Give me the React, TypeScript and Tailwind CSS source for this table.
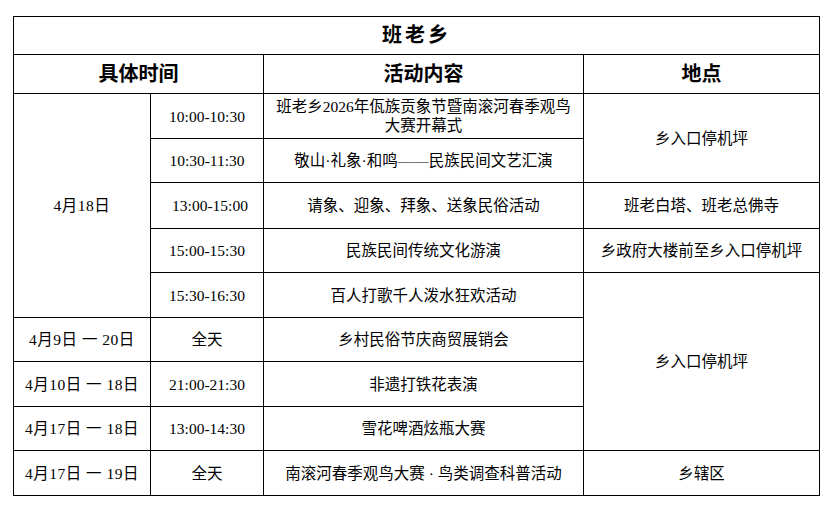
const font = { fontFamily: '"Liberation Serif", "Noto Sans CJK SC", serif' };

const cell = "border border-black text-center align-middle p-0";

export default function App() {
  return (
    <div className="w-[830px] h-[507px] bg-white pt-[16px] pl-[13px] text-black" style={font}>
      <table className="border-collapse table-fixed w-[806px] text-[15.5px] leading-[19px]">
        <colgroup>
          <col className="w-[137px]" />
          <col className="w-[113px]" />
          <col className="w-[320px]" />
          <col className="w-[236px]" />
        </colgroup>
        <tbody>
          <tr className="h-[38px]">
            <td colSpan={4} className={`${cell} text-[20px] font-bold tracking-[3px]`}>
              班老乡
            </td>
          </tr>
          <tr className="h-[39px]">
            <td colSpan={2} className={`${cell} text-[20px] font-bold`}>具体时间</td>
            <td className={`${cell} text-[20px] font-bold`}>活动内容</td>
            <td className={`${cell} text-[20px] font-bold`}>地点</td>
          </tr>
          <tr className="h-[45px]">
            <td rowSpan={5} className={`${cell} tracking-[0.5px]`}>4月18日</td>
            <td className={cell}>10:00-10:30</td>
            <td className={cell}>
              班老乡2026年佤族贡象节暨南滚河春季观鸟
              <br />
              大赛开幕式
            </td>
            <td rowSpan={2} className={cell}>乡入口停机坪</td>
          </tr>
          <tr className="h-[44px]">
            <td className={cell}>10:30-11:30</td>
            <td className={cell}>敬山·礼象·和鸣——民族民间文艺汇演</td>
          </tr>
          <tr className="h-[46px]">
            <td className={`${cell} pl-[6px]`}>13:00-15:00</td>
            <td className={cell}>请象、迎象、拜象、送象民俗活动</td>
            <td className={cell}>班老白塔、班老总佛寺</td>
          </tr>
          <tr className="h-[44px]">
            <td className={cell}>15:00-15:30</td>
            <td className={cell}>民族民间传统文化游演</td>
            <td className={cell}>乡政府大楼前至乡入口停机坪</td>
          </tr>
          <tr className="h-[45px]">
            <td className={cell}>15:30-16:30</td>
            <td className={cell}>百人打歌千人泼水狂欢活动</td>
            <td rowSpan={4} className={cell}>乡入口停机坪</td>
          </tr>
          <tr className="h-[44px]">
            <td className={`${cell} tracking-[0.5px]`}>4月9日 一 20日</td>
            <td className={cell}>全天</td>
            <td className={cell}>乡村民俗节庆商贸展销会</td>
          </tr>
          <tr className="h-[45px]">
            <td className={`${cell} tracking-[0.5px]`}>4月10日 一 18日</td>
            <td className={cell}>21:00-21:30</td>
            <td className={cell}>非遗打铁花表演</td>
          </tr>
          <tr className="h-[44px]">
            <td className={`${cell} tracking-[0.5px]`}>4月17日 一 18日</td>
            <td className={cell}>13:00-14:30</td>
            <td className={cell}>雪花啤酒炫瓶大赛</td>
          </tr>
          <tr className="h-[45px]">
            <td className={`${cell} tracking-[0.5px]`}>4月17日 一 19日</td>
            <td className={cell}>全天</td>
            <td className={cell}>南滚河春季观鸟大赛 · 鸟类调查科普活动</td>
            <td className={cell}>乡辖区</td>
          </tr>
        </tbody>
      </table>
    </div>
  );
}
